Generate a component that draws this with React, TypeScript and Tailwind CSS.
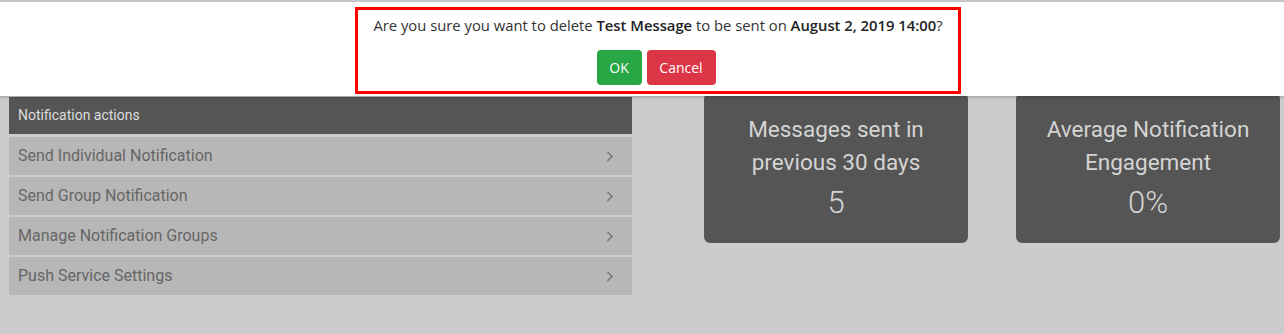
const actions = [
  'Send Individual Notification',
  'Send Group Notification',
  'Manage Notification Groups',
  'Push Service Settings',
]

const stats = [
  { label: ['Messages sent in', 'previous 30 days'], value: '5' },
  { label: ['Average Notification', 'Engagement'], value: '0%' },
]

function Chevron() {
  return (
    <svg width="8" height="11" viewBox="0 0 8 11" className="text-[#777777]">
      <polyline points="1.5,1 6,5.5 1.5,10" fill="none" stroke="currentColor" strokeWidth="1.6" />
    </svg>
  )
}

export default function App() {
  return (
    <div className="w-[1284px] h-[334px] overflow-hidden bg-[#cccccc] font-['Roboto',sans-serif]">
      {/* confirm bar */}
      <div className="mt-[2px] h-[94px] bg-white shadow-[0_1px_3px_rgba(0,0,0,0.25)] pt-[5px] relative z-10">
        <div className="ml-[355px] w-[606px] h-[87px] border-[3px] border-[#ff0000] flex flex-col items-center pt-[5px] font-['Open_Sans',sans-serif] text-[14.8px] text-[#333333]">
          <p className="leading-[20px]">
            Are you sure you want to delete <b className="font-semibold text-[#222]">Test Message</b> to be sent on{' '}
            <b className="font-semibold text-[#222]">August 2, 2019 14:00</b>?
          </p>
          <div className="mt-[15px] flex gap-[5px] pr-[4px]">
            <button className="h-[35px] w-[45px] rounded-[4px] bg-[#28a745] text-white text-[14px]">OK</button>
            <button className="h-[35px] w-[69px] rounded-[4px] bg-[#dc3545] text-white text-[14px]">Cancel</button>
          </div>
        </div>
      </div>

      <div className="flex pl-[9px] pt-[1px]">
        {/* actions panel */}
        <div className="w-[623px] flex flex-col gap-[2px]">
          <div className="h-[37px] mb-[1px] bg-[#555555] flex items-center px-[9px] text-[14px] text-[#dddddd]">
            Notification actions
          </div>
          {actions.map((a) => (
            <div key={a} className="h-[38px] bg-[#b7b7b7] flex items-center justify-between pl-[9px] pr-[18px] text-[16px] text-[#666666]">
              <span>{a}</span>
              <Chevron />
            </div>
          ))}
        </div>

        {/* stat cards */}
        <div className="ml-[72px] flex gap-[48px]">
          {stats.map((s) => (
            <div key={s.value} className="w-[264px] h-[150px] -mt-[4px] rounded-[6px] bg-[#555555] flex flex-col items-center pt-[20px] text-[#d4d4d4]">
              {s.label.map((l) => (
                <div key={l} className="text-[22.5px] leading-[33px]">{l}</div>
              ))}
              <div className="text-[31px] font-light leading-[40px] mt-[4px]">{s.value}</div>
            </div>
          ))}
        </div>
      </div>
    </div>
  )
}
